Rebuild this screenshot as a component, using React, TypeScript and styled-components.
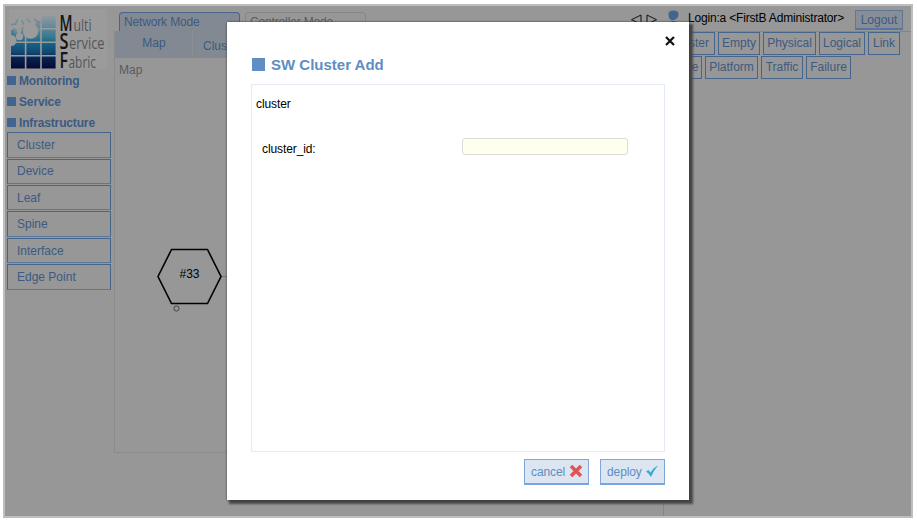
import React from "react";
import styled, { createGlobalStyle } from "styled-components";

const Global = createGlobalStyle`
  * { box-sizing: border-box; }
  body { margin: 0; background: #fff; font: 12px/14px "Liberation Sans", Arial, sans-serif; }
  button { font: inherit; padding: 0; }
`;

const ink = "#3c5a82";

const Page = styled.div`
  height: 521px;
  padding: 4px 4px 3px 3px;
  overflow: hidden;
`;
const Frame = styled.div`
  position: relative;
  display: flex;
  width: 910px;
  height: 514px;
  border: 2px solid #bebebe;
  background: #979797;
`;
const Sidebar = styled.aside`
  width: 109px;
  flex: none;
  padding: 3px 3px 0 2px;
  color: ${ink};
`;
const Logo = styled.svg`
  display: block;
  width: 100px;
  height: 61px;
  margin-left: 2px;
`;
const Heading = styled.div`
  display: flex;
  align-items: center;
  gap: 3px;
  height: 21px;
  font-weight: bold;
  letter-spacing: -0.15px;
  white-space: nowrap;
`;
const Square = styled.span<{ $size: number; $color: string }>`
  flex: none;
  width: ${(p) => p.$size}px;
  height: ${(p) => p.$size}px;
  background: ${(p) => p.$color};
`;
const Menu = styled.nav`
  display: grid;
  grid-auto-rows: 25.4px;
  gap: 1px;
  margin-top: -0.7px;
`;
const MenuItem = styled.button`
  border: 1px solid #46658c;
  border-bottom-color: #5b7698;
  background: #979797;
  color: ${ink};
  text-align: left;
  padding-left: 9px;
`;
const Main = styled.main`
  width: 549px;
  flex: none;
  display: flex;
  flex-direction: column;
`;
const Modes = styled.div`
  display: flex;
  gap: 5px;
  height: 25px;
  padding: 6px 0 0 5px;
`;
const Mode = styled.div<{ $active?: boolean }>`
  width: 121px;
  padding: 2px 4px 0;
  border: 1px solid ${(p) => (p.$active ? "#46658c" : "#878787")};
  border-bottom: 0;
  border-radius: 4px 4px 0 0;
  letter-spacing: -0.15px;
  color: ${(p) => (p.$active ? ink : "#5c5c5c")};
  background: ${(p) => (p.$active ? "#828993" : "#979797")};
`;
const MapPanel = styled.section`
  height: 422px;
  border: 1px solid #8b8b8b;
  border-top: 0;
`;
const Tabs = styled.div`
  display: flex;
  height: 27px;
`;
const Tab = styled.div<{ $active?: boolean }>`
  width: ${(p) => (p.$active ? 77 : 78)}px;
  padding-top: ${(p) => (p.$active ? 5 : 8)}px;
  padding-left: ${(p) => (p.$active ? 1 : 10)}px;
  text-align: ${(p) => (p.$active ? "center" : "left")};
  color: ${ink};
  background: #828993;
  border-left: ${(p) => (p.$active ? "0" : "1px solid #8a8f96")};
`;
const MapTitle = styled.div`
  padding: 5px 4px;
  color: #5c5c5c;
`;
const Graph = styled.svg`
  display: block;
  width: 160px;
  height: 90px;
  margin-top: 151px;
`;
const Aside = styled.section`
  flex: 1;
  min-width: 0;
  display: flex;
  flex-direction: column;
`;
const Account = styled.header`
  display: flex;
  justify-content: flex-end;
  height: 25px;
  margin-left: -40px;
  padding: 4px 8px 0 0;
  color: #000;
`;
const AccountIcons = styled.svg`
  flex: none;
  width: 52px;
  height: 20px;
  margin-right: 6px;
`;
const Login = styled.span`
  padding-top: 1px;
  white-space: nowrap;
  letter-spacing: -0.18px;
  margin-right: 11px;
`;
const Logout = styled.button`
  width: 48px;
  height: 20px;
  border: 1px solid #5f7797;
  border-bottom: 2px solid #55769f;
  background: #878e98;
  color: ${ink};
`;
const Views = styled.div`
  flex: 1;
  border: solid #858585;
  border-width: 1px 0 0 1px;
  padding: 0 11px 0 0;
`;
const ViewRow = styled.div<{ $end?: number }>`
  display: flex;
  justify-content: flex-end;
  gap: 3px;
  height: 24px;
  padding-right: ${(p) => p.$end ?? 0}px;
`;
const View = styled.button<{ $w: number }>`
  width: ${(p) => p.$w}px;
  height: 23px;
  flex: none;
  padding-bottom: 1px;
  border: 1px solid #46658c;
  background: #979797;
  color: ${ink};
`;
const Dialog = styled.div`
  position: absolute;
  left: 222px;
  top: 16px;
  width: 462px;
  height: 478px;
  padding: 35px 24px 0;
  background: #fff;
  box-shadow: 0 0 2px #333, 3px 3px 2px 1px #484848;
`;
const Close = styled.svg`
  position: absolute;
  right: 14px;
  top: 14px;
  width: 10px;
  height: 10px;
`;
const Title = styled.h1`
  display: flex;
  align-items: center;
  gap: 7px;
  margin: 0 0 12px;
  height: 15px;
  font-size: 15px;
  line-height: 15px;
  color: #608dc3;
`;
const TitleMark = styled(Square)`
  margin: -1px 0 0 1px;
  margin-right: -1px;
`;
const Form = styled.div`
  height: 368px;
  border: 1px solid #e4ebf6;
  padding: 12px 4px;
  letter-spacing: -0.1px;
`;
const Field = styled.label`
  display: flex;
  margin-top: 27px;
  padding-left: 6px;
`;
const FieldName = styled.span`
  width: 200px;
  padding-top: 4px;
`;
const Input = styled.input`
  width: 166px;
  height: 17px;
  border: 1px solid #dcdcdc;
  border-radius: 3px;
  background: #ffffee;
`;
const Actions = styled.div`
  display: flex;
  justify-content: flex-end;
  gap: 11px;
  margin-top: 7px;
`;
const Action = styled.button`
  display: flex;
  align-items: center;
  justify-content: space-between;
  width: 65px;
  height: 26px;
  padding: 0 5px 0 6px;
  border: 1px solid #82a6d8;
  border-bottom: 2px solid #76a5e2;
  background: #dce6f2;
  color: #608dc3;
  letter-spacing: -0.1px;
`;
const ActionIcon = styled.svg`
  flex: none;
  width: 14px;
  height: 14px;
  margin-top: -2px;
`;

const WORDS = [
  { cap: "M", rest: "ulti", y: 31, capWidth: 13, x: 73.5, width: 18 },
  { cap: "S", rest: "ervice", y: 49.3, capWidth: 9, x: 69, width: 35.5 },
  { cap: "F", rest: "abric", y: 67.7, capWidth: 8.5, x: 68.5, width: 27.5 },
];

const Brand = () => (
  <Logo viewBox="9 9 100 61">
    <defs>
      <linearGradient id="tiles" gradientUnits="userSpaceOnUse" x1="0" x2="0" y1="16" y2="68">
        <stop offset="0" stopColor="#8f999e" />
        <stop offset=".23" stopColor="#5f8799" />
        <stop offset=".4" stopColor="#377991" />
        <stop offset=".52" stopColor="#176486" />
        <stop offset=".7" stopColor="#114873" />
        <stop offset=".82" stopColor="#08214e" />
        <stop offset="1" stopColor="#050a36" />
      </linearGradient>
    </defs>
    <rect x="9" y="9" width="98" height="60" fill="#9b9b9b" />
    <g fill="url(#tiles)">
      {[0, 1, 2, 3].flatMap((r) =>
        [0, 1, 2].map((c) => (
          <rect key={`${r}-${c}`} x={11 + c * 15.4} y={16 + r * 13.5} width="13.8" height="12" />
        ))
      )}
    </g>
    <g fill="#9b9b9b">
      <path d="M9 14H41V20L37 22 34 26H26L20 30 17 28 11 30H9Z" />
      <circle cx="30.5" cy="31" r="7.8" />
      <circle cx="11" cy="40.500" r="5.5" />
      <circle cx="19.500" cy="36.500" r="3.7" />
      <circle cx="19" cy="30.500" r="2.6" />
    </g>
    <g fill="none" stroke="#6f8a97" strokeWidth="1.5" strokeLinecap="round">
      <path d="M11.500 24.500 15.500 24 17.500 20M22 20.500 23.500 24M14 28.500 15.500 32.500M27.500 19.500 30 22M34.500 19 37 21.500 40 22M22.500 27.500V31.500M16 30.500V33" />
      <path d="M37 25.500Q39.500 28 39.500 31" />
    </g>
    <g fontFamily="Open Sans, sans-serif" fill="#555">
      {WORDS.map((w) => (
        <React.Fragment key={w.cap}>
          <text x="59.5" y={w.y} fontSize="21" fontWeight="600" fill="#151515" textLength={w.capWidth} lengthAdjust="spacingAndGlyphs">{w.cap}</text>
          <text x={w.x} y={w.y} fontSize="17" textLength={w.width} lengthAdjust="spacingAndGlyphs">{w.rest}</text>
        </React.Fragment>
      ))}
    </g>
  </Logo>
);

export default function App() {
  return (
    <>
      <Global />
      <Page>
        <Frame>
          <Sidebar>
            <Brand />
            {["Monitoring", "Service", "Infrastructure"].map((t) => (
              <Heading key={t}>
                <Square $size={9} $color="#41658f" />
                {t}
              </Heading>
            ))}
            <Menu>
              {["Cluster", "Device", "Leaf", "Spine", "Interface", "Edge Point"].map((t) => (
                <MenuItem key={t}>{t}</MenuItem>
              ))}
            </Menu>
          </Sidebar>
          <Main>
            <Modes>
              <Mode $active>Network Mode</Mode>
              <Mode>Controller Mode</Mode>
            </Modes>
            <MapPanel>
              <Tabs>
                <Tab $active>Map</Tab>
                <Tab>Cluster</Tab>
              </Tabs>
              <MapTitle>Map</MapTitle>
              <Graph viewBox="115 233 160 90">
                <path d="M221 276.5H270" stroke="#777" />
                <path d="M158 276.5 171.5 249.5H207.5L221 276.5 207.5 303.5H171.5Z" fill="none" stroke="#000" strokeWidth="1.6" />
                <circle cx="176.5" cy="308.5" r="2.6" fill="none" stroke="#444" />
                <text x="189.5" y="278" textAnchor="middle" fontSize="12">#33</text>
              </Graph>
            </MapPanel>
          </Main>
          <Aside>
            <Account>
              <AccountIcons viewBox="629 10 52 20">
                <path d="M640 15V24L630.5 19.7ZM646 15V24L655.5 19.7Z" fill="none" stroke="#111" />
                <path d="M667.500 14Q667.500 10.500 672.500 10.500T677.500 14Q677.500 19 672.500 20T667.500 14Z" fill="#41658f" />
                <path d="M666 27Q667 21 672.5 21T679 27Z" fill="#41658f" />
              </AccountIcons>
              <Login>Login:a &lt;FirstB Administrator&gt;</Login>
              <Logout>Logout</Logout>
            </Account>
            <Views>
              <ViewRow>
                <View $w={50}>Cluster</View>
                <View $w={42}>Empty</View>
                <View $w={53}>Physical</View>
                <View $w={46}>Logical</View>
                <View $w={32}>Link</View>
              </ViewRow>
              <ViewRow $end={49}>
                <View $w={36}>Node</View>
                <View $w={53}>Platform</View>
                <View $w={42}>Traffic</View>
                <View $w={45}>Failure</View>
              </ViewRow>
            </Views>
          </Aside>
          <Dialog role="dialog">
            <Close viewBox="0 0 10 10">
              <path d="M1 1 9 9M9 1 1 9" stroke="#111" strokeWidth="2.2" />
            </Close>
            <Title>
              <TitleMark $size={13} $color="#608dc3" />
              SW Cluster Add
            </Title>
            <Form>
              cluster
              <Field>
                <FieldName>cluster_id:</FieldName>
                <Input />
              </Field>
            </Form>
            <Actions>
              <Action>
                cancel
                <ActionIcon viewBox="0 0 14 14">
                  <path d="M2 2 12 12M12 2 2 12" stroke="#e25454" strokeWidth="3.6" />
                </ActionIcon>
              </Action>
              <Action>
                deploy
                <ActionIcon viewBox="0 0 14 14">
                  <path d="M1 7.500 3.500 6 5.500 8.500Q8.500 3.500 13 1.500 8.500 6.500 6 13Q4 9.500 1 7.500Z" fill="#3aa9d6" />
                </ActionIcon>
              </Action>
            </Actions>
          </Dialog>
        </Frame>
      </Page>
    </>
  );
}
